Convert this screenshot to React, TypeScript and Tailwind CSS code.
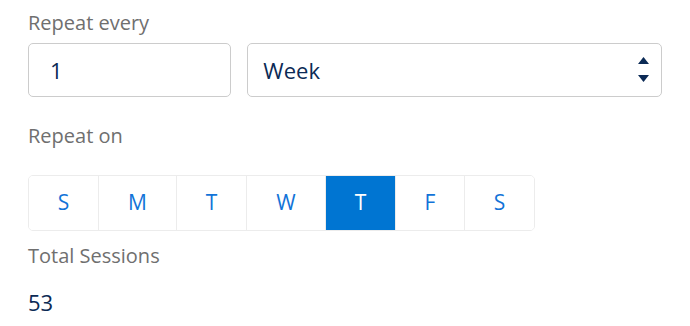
import React, { useState } from "react";

const days = [
  { label: "S", w: "w-[69px]" },
  { label: "M", w: "w-[78px]" },
  { label: "T", w: "w-[70px]" },
  { label: "W", w: "w-[79px]" },
  { label: "T", w: "w-[70px]" },
  { label: "F", w: "w-[69px]" },
  { label: "S", w: "w-[70px]" },
];

export default function App() {
  const [selected, setSelected] = useState(4);
  return (
    <div className="min-h-[326px] bg-white px-[28px] pt-[8px] font-['Open_Sans',sans-serif]">
      <div className="text-[20px] leading-[30px] text-[#6f6f6f]">Repeat every</div>
      <div className="mt-[5px] flex gap-[16px]">
        <div className="flex h-[54px] w-[204px] items-center rounded-[5px] border border-[#cccccc] pl-[21px] text-[22px] text-[#0b2a55]">
          1
        </div>
        <div className="flex h-[54px] w-[416px] items-center justify-between rounded-[5px] border border-[#cccccc] pl-[15px] pr-[12px] text-[22px] text-[#0b2a55]">
          <span>Week</span>
          <svg width="11" height="26" viewBox="0 0 11 26" className="fill-[#0b2a55]">
            <polygon points="5.5,0 11,7 0,7" />
            <polygon points="0,18 11,18 5.5,25" />
          </svg>
        </div>
      </div>
      <div className="mt-[24px] text-[20px] leading-[30px] text-[#6f6f6f]">Repeat on</div>
      <div className="mt-[24px] flex w-fit overflow-hidden rounded-[5px] border border-[#ececec]">
        {days.map((d, i) => (
          <button
            key={i}
            onClick={() => setSelected(i)}
            className={`${d.w} flex h-[54px] items-center justify-center text-[21px] ${
              i > 0 ? "border-l border-[#ececec]" : ""
            } ${i === selected ? "bg-[#0075d2] text-white" : "bg-white text-[#1273d8]"}`}
          >
            {d.label}
          </button>
        ))}
      </div>
      <div className="mt-[10px] text-[20px] leading-[30px] text-[#6f6f6f]">Total Sessions</div>
      <div className="mt-[16px] text-[22px] leading-[30px] text-[#0b2a55]">53</div>
    </div>
  );
}
